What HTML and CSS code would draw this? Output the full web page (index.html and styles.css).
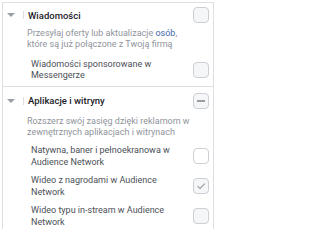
FILE: index.html
```html
<!DOCTYPE html>
<html lang="pl">
<head>
<meta charset="utf-8">
<link rel="stylesheet" href="styles.css">
</head>
<body>
<div class="panel">
  <section class="section first">
    <div class="head">
      <span class="caret"></span>
      <span class="sep"></span>
      <span class="title">Wiadomości</span>
      <span class="box gray"></span>
    </div>
    <p class="desc">Przesyłaj oferty lub aktualizacje <span class="link">osób</span>,<br>które są już połączone z Twoją firmą</p>
    <div class="item">
      <span class="label">Wiadomości sponsorowane w Messengerze</span>
      <span class="box gray"></span>
    </div>
  </section>
  <section class="section second">
    <div class="head">
      <span class="caret"></span>
      <span class="sep"></span>
      <span class="title">Aplikacje i witryny</span>
      <span class="box gray minus"><span class="dash"></span></span>
    </div>
    <p class="desc">Rozszerz swój zasięg dzięki reklamom w zewnętrznych aplikacjach i witrynach</p>
    <div class="item">
      <span class="label">Natywna, baner i pełnoekranowa w Audience Network</span>
      <span class="box white"></span>
    </div>
    <div class="item">
      <span class="label">Wideo z nagrodami w Audience Network</span>
      <span class="box gray"><svg width="12" height="12" viewBox="0 0 12 12"><path d="M2.5 6.2 L5 8.5 L9.8 3.6" fill="none" stroke="#9a9da3" stroke-width="1.1"/></svg></span>
    </div>
    <div class="item">
      <span class="label">Wideo typu in-stream w Audience Network</span>
      <span class="box gray"></span>
    </div>
  </section>
</div>
</body>
</html>
```
FILE: styles.css
```css
* { box-sizing: border-box; }
html, body { margin: 0; padding: 0; background: #fff; }
body {
  font-family: Roboto, "Liberation Sans", Arial, sans-serif;
  font-size: 9px;
  color: #4b4f56;
  width: 217px;
  height: 229px;
  overflow: hidden;
}
.panel {
  margin: 2px 3px 0 2px;
  border: 1px solid #dddfe2;
  border-bottom: none;
  height: 230px;
}
.section { padding: 0 4px 0 4px; }
.section.first { border-bottom: 1px solid #dddfe2; padding-bottom: 4.5px; }
.head {
  display: flex;
  align-items: center;
  height: 24px;
}
.second .head { height: 28.5px; }
.caret {
  width: 0; height: 0;
  border-left: 4px solid transparent;
  border-right: 4px solid transparent;
  border-top: 4px solid #9a9ea5;
  margin-right: 8px;
}
.sep {
  width: 1px; height: 8px;
  background: #dddfe2;
  margin-right: 4px;
}
.title {
  flex: 1;
  font-weight: 500;
  color: #1d2129;
  font-size: 9.5px;
}
.desc {
  margin: 1px 0 0;
  padding-left: 20px;
  padding-right: 19px;
  color: #90949c;
  line-height: 11px;
  font-size: 9px;
}
.link { color: #4267b2; }
.item {
  display: flex;
  align-items: center;
  padding-left: 24px;
  margin-top: 6px;
}
.first .item { margin-top: 9px; }
.label {
  flex: 1;
  line-height: 12px;
  padding-right: 8px;
}
.first .label { line-height: 11px; }
.box {
  width: 16px; height: 16px;
  border: 1px solid #ccd0d5;
  border-radius: 4px;
  flex: none;
  display: flex;
  align-items: center;
  justify-content: center;
}
.box.gray { background: #f5f6f7; }
.box.white { background: #fff; }
.dash { width: 8px; height: 1.5px; background: #9a9da3; }
```
